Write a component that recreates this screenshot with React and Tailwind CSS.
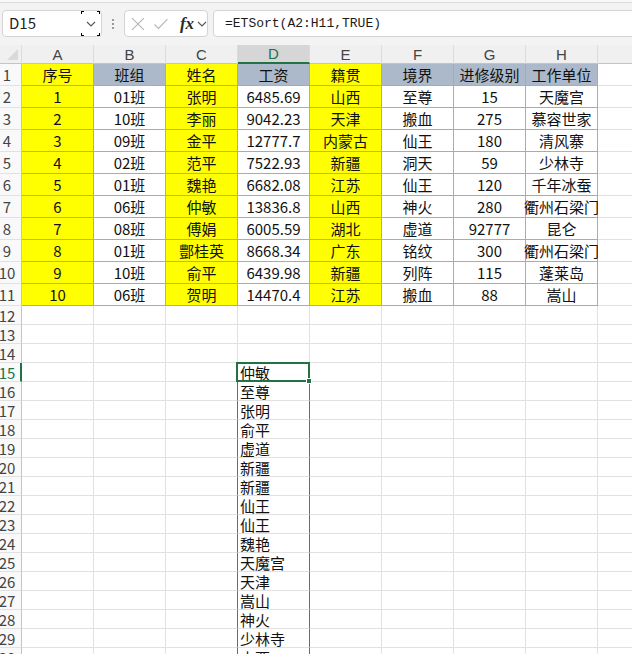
import React from 'react';

const cols = ['A', 'B', 'C', 'D', 'E', 'F', 'G', 'H'];

const table = [
  ['序号', '班组', '姓名', '工资', '籍贯', '境界', '进修级别', '工作单位'],
  ['1', '01班', '张明', '6485.69', '山西', '至尊', '15', '天魔宫'],
  ['2', '10班', '李丽', '9042.23', '天津', '搬血', '275', '慕容世家'],
  ['3', '09班', '金平', '12777.7', '内蒙古', '仙王', '180', '清风寨'],
  ['4', '02班', '范平', '7522.93', '新疆', '洞天', '59', '少林寺'],
  ['5', '01班', '魏艳', '6682.08', '江苏', '仙王', '120', '千年冰蚕'],
  ['6', '06班', '仲敏', '13836.8', '山西', '神火', '280', '衢州石梁门'],
  ['7', '08班', '傅娟', '6005.59', '湖北', '虚道', '92777', '昆仑'],
  ['8', '01班', '酆桂英', '8668.34', '广东', '铭纹', '300', '衢州石梁门'],
  ['9', '10班', '俞平', '6439.98', '新疆', '列阵', '115', '蓬莱岛'],
  ['10', '06班', '贺明', '14470.4', '江苏', '搬血', '88', '嵩山'],
];

const spill = ['仲敏', '至尊', '张明', '俞平', '虚道', '新疆', '新疆', '仙王', '仙王', '魏艳', '天魔宫', '天津', '嵩山', '神火', '少林寺', '山西'];

const font = { fontFamily: '"Noto Sans CJK SC", "Liberation Sans", sans-serif' };

const Chevron = ({ className }) => (
  <svg width="10" height="6" viewBox="0 0 10 6" className={className}>
    <path d="M1 1 L5 5 L9 1" fill="none" stroke="#555" strokeWidth="1.1" />
  </svg>
);

const FormulaBar = () => (
  <div className="h-[45px] bg-[#f3f3f3]">
    <div className="h-[3px] bg-[#f8f8f8] border-b border-[#dcdcdc]" />
    <div className="flex items-center pt-[7px]">
      {/* name box */}
      <div className="relative ml-[2px] w-[100px] h-[27px] bg-white border border-[#d4d4d4] rounded-[4px] flex items-center">
        <span className="pl-[6px] text-[15px] text-[#1f1f1f]" style={font}>D15</span>
        <div className="absolute right-[1px] top-0 h-full w-[19px] flex items-center justify-center">
          <Chevron />
          <span className="absolute left-0 top-0 w-[3px] h-[3px] border-l border-t border-black" />
          <span className="absolute left-0 bottom-0 w-[3px] h-[3px] border-l border-b border-black" />
          <span className="absolute right-0 top-0 w-[3px] h-[3px] border-r border-t border-black" />
          <span className="absolute right-0 bottom-0 w-[3px] h-[3px] border-r border-b border-black" />
        </div>
      </div>
      <div className="ml-[10px] w-[2px] flex flex-col gap-[2px]">
        <span className="w-[2px] h-[2px] bg-[#9a9a9a]" />
        <span className="w-[2px] h-[2px] bg-[#9a9a9a]" />
        <span className="w-[2px] h-[2px] bg-[#9a9a9a]" />
      </div>
      {/* cancel / confirm / fx */}
      <div className="ml-[10px] w-[84px] h-[27px] bg-white border border-[#d4d4d4] rounded-[4px] flex items-center">
        <svg width="16" height="16" viewBox="0 0 16 16" className="ml-[5px]">
          <path d="M2 2 L14 14 M14 2 L2 14" stroke="#b5b5b5" strokeWidth="1.1" />
        </svg>
        <svg width="16" height="16" viewBox="0 0 16 16" className="ml-[7px]">
          <path d="M1.5 8.5 L5.5 12.5 L14.5 3" fill="none" stroke="#b5b5b5" strokeWidth="1.1" />
        </svg>
        <span
          className="ml-[11px] text-[17px] italic font-semibold text-[#2a2a2a] leading-none"
          style={{ fontFamily: '"Liberation Serif", serif' }}
        >
          fx
        </span>
        <Chevron className="ml-[3px]" />
      </div>
      <div className="ml-[5px] flex-1 mr-[-8px] h-[27px] bg-white border border-[#d4d4d4] rounded-[4px] flex items-center">
        <span className="pl-[11px] text-[13px] text-[#1a1a1a]" style={{ fontFamily: '"Liberation Mono", monospace' }}>
          =ETSort(A2:H11,TRUE)
        </span>
      </div>
    </div>
  </div>
);

const App = () => {
  const dark = 'border-[#ababab]';
  const light = 'border-[#e1e1e1]';

  const dataRows = table.map((row, ri) => {
    const n = ri + 1;
    return (
      <React.Fragment key={n}>
        <div className="h-[22px] bg-[#f9f9f9] border-r border-b border-r-[#c4c4c4] border-b-[#e1e1e1] flex items-center">
          <span className="w-[14px] flex justify-center text-[15px] text-[#444]">{n}</span>
        </div>
        {row.map((v, ci) => {
          const yellow = ci % 2 === 0 && ci < 5;
          const bg = yellow ? 'bg-[#ffff00]' : ri === 0 ? 'bg-[#acb9ca]' : 'bg-white';
          return (
            <div
              key={ci}
              className={`h-[22px] border-r border-b ${dark} ${bg} flex items-center justify-center text-[15px] text-[#111] whitespace-nowrap overflow-visible`}
            >
              {v}
            </div>
          );
        })}
        <div className={`h-[22px] border-b ${light} bg-white`} />
      </React.Fragment>
    );
  });

  const emptyRows = [];
  for (let n = 12; n <= 30; n++) {
    const sel = n === 15;
    const inSpill = n >= 15;
    const value = inSpill ? spill[n - 15] : null;
    emptyRows.push(
      <React.Fragment key={n}>
        <div
          className={`h-[19px] bg-[#f9f9f9] border-b border-b-[#e1e1e1] flex items-center ${
            sel ? 'border-r-2 border-r-[#217346]' : 'border-r border-r-[#c4c4c4]'
          }`}
        >
          <span className={`w-[14px] flex justify-center text-[15px] ${sel ? 'text-[#217346]' : 'text-[#444]'}`}>{n}</span>
        </div>
        {cols.map((c, ci) => {
          const isSel = ci === 3 && sel;
          let cls = `h-[19px] bg-white border-b ${light} border-r`;
          if (inSpill && (ci === 2 || ci === 3) && n > 15) cls += ' border-r-[#4a6fb5]';
          else cls += ' border-r-[#e1e1e1]';
          return (
            <div key={c} className={`${isSel ? 'relative z-10' : ''} ${cls} flex items-center`}>
              {ci === 3 && value && (
                <span className="pl-[2px] text-[15px] text-[#111] whitespace-nowrap">{value}</span>
              )}
              {isSel && (
                <>
                  <div className="absolute left-[-2px] top-[-1px] right-[-1px] bottom-[-1px] border-2 border-solid border-[#217346]" />
                  <div className="absolute right-[-3px] bottom-[-3px] w-[6px] h-[6px] bg-[#217346] border border-white" />
                </>
              )}
            </div>
          );
        })}
        <div className={`h-[19px] border-b ${light} bg-white`} />
      </React.Fragment>
    );
  }

  return (
    <div className="w-[632px] h-[654px] overflow-hidden bg-white" style={font}>
      <FormulaBar />
      <div className="grid grid-cols-[22px_repeat(8,72px)_1fr] leading-none">
        {/* column header row */}
        <div className="relative h-[19px] bg-[#f0f0f0] border-r border-b border-r-[#dcdcdc] border-b-[#c4c4c4]">
          <svg width="11" height="11" viewBox="0 0 11 11" className="absolute left-[7px] top-[4px]">
            <path d="M11 0 L11 11 L0 11 Z" fill="#d9d9d9" />
          </svg>
        </div>
        {cols.map((c) => {
          const sel = c === 'D';
          return (
            <div
              key={c}
              className={`h-[19px] border-r border-r-[#dcdcdc] flex items-center justify-center text-[15px] ${
                sel
                  ? 'bg-[#d6d6d6] border-b-2 border-b-[#217346] text-[#217346]'
                  : 'bg-[#f0f0f0] border-b border-b-[#c4c4c4] text-[#444]'
              }`}
              style={{ fontFamily: '"Liberation Sans", sans-serif' }}
            >
              {c}
            </div>
          );
        })}
        <div className="h-[19px] bg-[#f0f0f0] border-b border-b-[#c4c4c4]" />
        {dataRows}
        {emptyRows}
      </div>
    </div>
  );
};

export default App;
